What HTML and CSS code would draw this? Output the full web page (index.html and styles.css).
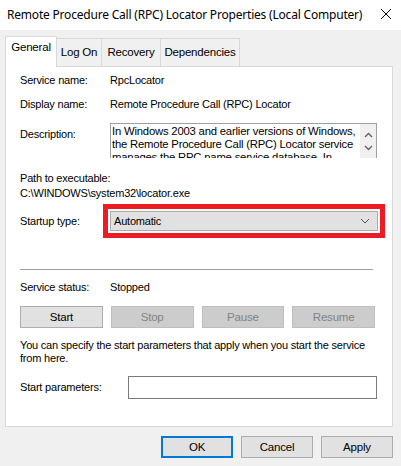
FILE: index.html
```html
<!DOCTYPE html>
<html lang="en">
<head>
    <meta charset="UTF-8">
    <meta name="viewport" content="width=device-width, initial-scale=1.0">
    <title>Remote Procedure Call (RPC) Locator Properties</title>
    <link rel="stylesheet" href="styles.css">
</head>
<body>
    <!-- Title bar -->
    <div class="titlebar">
        <span class="title">Remote Procedure Call (RPC) Locator Properties (Local Computer)</span>
        <svg class="close" width="12" height="12" viewBox="0 0 12 12">
            <path d="M1 1 L11 11 M11 1 L1 11" stroke="#000" stroke-width="1" fill="none"/>
        </svg>
    </div>

    <!-- Tabs -->
    <div class="tabs">
        <div class="tab active">General</div>
        <div class="tab tab-logon">Log On</div>
        <div class="tab tab-recovery">Recovery</div>
        <div class="tab tab-deps">Dependencies</div>
    </div>

    <!-- General panel -->
    <div class="panel">
        <div class="row row-service">
            <span class="label">Service name:</span>
            <span>RpcLocator</span>
        </div>
        <div class="row row-display">
            <span class="label">Display name:</span>
            <span>Remote Procedure Call (RPC) Locator</span>
        </div>
        <div class="row row-desc">
            <span class="label desc-label">Description:</span>
            <div class="desc-box">
                <div class="desc-text">In Windows 2003 and earlier versions of Windows, the Remote Procedure Call (RPC) Locator service manages the RPC name service database. In Windows Vista and later versions of Windows, this service does not provide any functionality.</div>
                <div class="scrollbar">
                    <svg width="9" height="6" viewBox="0 0 9 6"><path d="M1 5 L4.5 1.5 L8 5" stroke="#606060" stroke-width="1.3" fill="none"/></svg>
                    <svg width="9" height="6" viewBox="0 0 9 6"><path d="M1 1 L4.5 4.5 L8 1" stroke="#606060" stroke-width="1.3" fill="none"/></svg>
                </div>
            </div>
        </div>
        <div class="path">
            <div>Path to executable:</div>
            <div>C:\WINDOWS\system32\locator.exe</div>
        </div>
        <div class="row row-startup">
            <span class="label">Startup type:</span>
            <div class="highlight">
                <div class="combo">
                    <span>Automatic</span>
                    <svg width="10" height="6" viewBox="0 0 10 6"><path d="M1 1 L5 5 L9 1" stroke="#505050" stroke-width="1" fill="none"/></svg>
                </div>
            </div>
        </div>
        <div class="separator"></div>
        <div class="row row-status">
            <span class="label">Service status:</span>
            <span>Stopped</span>
        </div>
        <div class="service-buttons">
            <button class="btn">Start</button>
            <button class="btn" disabled>Stop</button>
            <button class="btn" disabled>Pause</button>
            <button class="btn" disabled>Resume</button>
        </div>
        <p class="hint">You can specify the start parameters that apply when you start the service from here.</p>
        <div class="row row-params">
            <span class="label params-label">Start parameters:</span>
            <div class="input"></div>
        </div>
    </div>

    <!-- Dialog buttons -->
    <div class="dialog-buttons">
        <button class="btn btn-default">OK</button>
        <button class="btn">Cancel</button>
        <button class="btn">Apply</button>
    </div>
</body>
</html>
```

FILE: styles.css
```css
body {
    font-family: "Liberation Sans", Arial, sans-serif;
    font-size: 11px;
    line-height: 13px;
    letter-spacing: -0.2px;
    margin: 0;
    padding: 0;
    width: 401px;
    height: 466px;
    overflow: hidden;
    background-color: #f0f0f0;
    color: #000;
}

/* Title bar */
.titlebar {
    height: 30px;
    background-color: #fff;
    display: flex;
    align-items: center;
    justify-content: space-between;
    padding: 0 9px 0 7px;
}

.title {
    font-family: "Noto Sans", sans-serif;
    font-size: 12px;
    letter-spacing: -0.2px;
    margin-top: -2px;
}

.close {
    margin-top: -2px;
}

/* Tabs */
.tabs {
    display: flex;
    align-items: flex-end;
    height: 36px;
    padding-left: 5px;
    box-sizing: border-box;
}

.tab {
    height: 28px;
    box-sizing: border-box;
    border: 1px solid #d9d9d9;
    border-bottom: none;
    border-left: none;
    text-align: center;
    line-height: 20px;
    padding-top: 3px;
    font-size: 11.5px;
}

.tab.active {
    width: 52px;
    height: 31px;
    margin-bottom: -1px;
    position: relative;
    background-color: #fff;
    border-left: 1px solid #d9d9d9;
    line-height: 18px;
    padding-top: 1px;
}

.tab-logon { width: 45px; }
.tab-recovery { width: 59px; }
.tab-deps { width: 79px; }

/* Panel */
.panel {
    width: 388px;
    height: 361px;
    margin-left: 5px;
    box-sizing: border-box;
    background-color: #fff;
    border: 1px solid #d9d9d9;
    padding: 0 0 0 14px;
}

.row {
    display: flex;
    align-items: center;
}

.label {
    width: 90px;
    flex-shrink: 0;
}

.row-service { margin-top: 7px; }
.row-display { margin-top: 11px; }

.row-desc {
    margin-top: 12px;
    align-items: flex-start;
}

.desc-label {
    padding-top: 5px;
}

.desc-box {
    width: 267px;
    height: 35px;
    box-sizing: border-box;
    border: 1px solid #a0a0a0;
    border-bottom: none;
    display: flex;
}

.desc-text {
    flex: 1;
    overflow: hidden;
    padding: 1px 0 0 1px;
    font-size: 11.3px;
}

.scrollbar {
    width: 16px;
    background-color: #f0f0f0;
    display: flex;
    flex-direction: column;
    align-items: center;
    justify-content: space-around;
    padding: 4px 0 3px;
    box-sizing: border-box;
}

.path {
    margin-top: 13px;
    line-height: 15px;
}

.row-startup { margin-top: 3px; }

.highlight {
    margin-left: -7px;
    width: 282px;
    height: 34px;
    box-sizing: border-box;
    border: 5px solid #ed1c24;
    padding: 2px;
}

.combo {
    height: 20px;
    box-sizing: border-box;
    border: 1px solid #adadad;
    background-color: #e1e1e1;
    display: flex;
    align-items: center;
    justify-content: space-between;
    padding: 0 7px 0 3px;
}

.separator {
    margin-top: 31px;
    width: 353px;
    height: 1px;
    background-color: #a0a0a0;
}

.row-status { margin-top: 11px; }

.service-buttons {
    margin-top: 12px;
    width: 355px;
    display: grid;
    grid-template-columns: repeat(4, 1fr);
    gap: 8px;
}

.btn {
    font-family: "Liberation Sans", Arial, sans-serif;
    font-size: 11.5px;
    letter-spacing: -0.2px;
    height: 22px;
    padding: 0;
    border: 1px solid #adadad;
    background-color: #e1e1e1;
    color: #000;
}

.btn:disabled {
    background-color: #cccccc;
    border-color: #bfbfbf;
    color: #838383;
}

.hint {
    margin: 11px 0 0;
    width: 365px;
}

.row-params { margin-top: 11px; }

.params-label {
    width: 108px;
}

.input {
    width: 249px;
    height: 23px;
    box-sizing: border-box;
    border: 1px solid #7a7a7a;
}

/* Bottom buttons */
.dialog-buttons {
    display: flex;
    justify-content: flex-end;
    gap: 8px;
    width: 393px;
    margin-top: 9px;
}

.dialog-buttons .btn {
    width: 72px;
}

.btn-default {
    border: 2px solid #0078d7;
}
```
